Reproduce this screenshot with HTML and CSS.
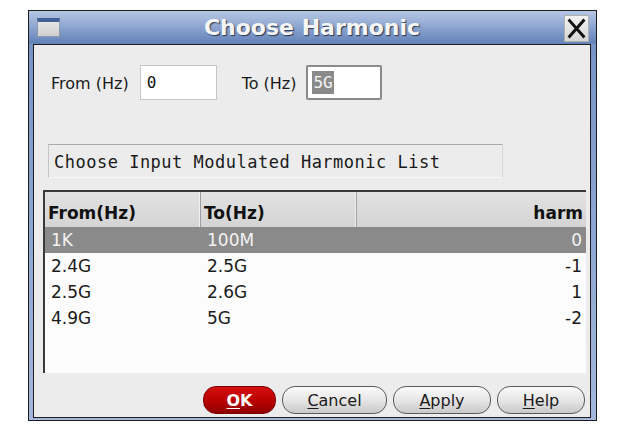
FILE: index.html
```html
<!DOCTYPE html>
<html>
<head>
<meta charset="utf-8">
<link rel="stylesheet" href="styles.css">
</head>
<body>
<div class="window">
  <div class="titlebar">
    <div class="win-icon"></div>
    <div class="title">Choose Harmonic</div>
    <div class="close">
      <svg width="25" height="27" viewBox="0 0 25 27">
        <path d="M5 5 L20 22 M20 5 L5 22" stroke="#111" stroke-width="3.2" stroke-linecap="square"/>
      </svg>
    </div>
  </div>
  <div class="panel">
    <div class="fields">
      <span class="lbl">From (Hz)</span>
      <div class="input from"><span>0</span></div>
      <span class="lbl to-lbl">To (Hz)</span>
      <div class="input to"><span class="sel">5G</span></div>
    </div>
    <div class="caption">Choose Input Modulated Harmonic List</div>
    <div class="table">
      <div class="thead">
        <div class="th c1">From(Hz)</div>
        <div class="th c2">To(Hz)</div>
        <div class="th c3">harm</div>
      </div>
      <div class="row selected">
        <div class="td c1">1K</div><div class="td c2">100M</div><div class="td c3">0</div>
      </div>
      <div class="row">
        <div class="td c1">2.4G</div><div class="td c2">2.5G</div><div class="td c3">-1</div>
      </div>
      <div class="row">
        <div class="td c1">2.5G</div><div class="td c2">2.6G</div><div class="td c3">1</div>
      </div>
      <div class="row">
        <div class="td c1">4.9G</div><div class="td c2">5G</div><div class="td c3">-2</div>
      </div>
    </div>
    <div class="buttons">
      <button class="btn ok"><u>O</u>K</button>
      <button class="btn cancel"><u>C</u>ancel</button>
      <button class="btn apply"><u>A</u>pply</button>
      <button class="btn help"><u>H</u>elp</button>
    </div>
  </div>
</div>
</body>
</html>
```
FILE: styles.css
```css
html, body {
  margin: 0;
  padding: 0;
  background: #ffffff;
}
body {
  width: 625px;
  height: 432px;
  overflow: hidden;
  font-family: "DejaVu Sans", sans-serif;
}
.window {
  margin: 10px 0 0 28px;
  width: 569px;
  height: 411px;
  box-sizing: border-box;
  border: 1px solid #1c1c1c;
  padding: 0 5px 2px 4px;
  display: flex;
  flex-direction: column;
  background: linear-gradient(to bottom, #b6c7e5 0px, #6181b8 33px, #7794c6 33px, #a3b8dc 100%);
}
.titlebar {
  height: 33px;
  display: flex;
  align-items: center;
  flex-shrink: 0;
}
.win-icon {
  width: 23px;
  height: 19px;
  margin-left: 4px;
  box-sizing: border-box;
  border: 1px solid #8c98ac;
  border-top: 4px solid #3f5f96;
  background: linear-gradient(#e6e6e6, #cfcfcf);
}
.title {
  flex: 1;
  text-align: center;
  color: #f6f6f6;
  font-weight: bold;
  font-size: 22px;
  text-shadow: 1px 1px 1px #2a3650;
  line-height: 33px;
}
.close {
  width: 25px;
  height: 27px;
  margin-right: 2px;
  margin-top: 2px;
  box-sizing: border-box;
  background: linear-gradient(#f2f2f2, #d6d6d6);
  border: 1px solid #b0b0b0;
  display: flex;
  align-items: center;
  justify-content: center;
}
.close svg { display: block; }
.panel {
  flex: 1;
  border: 1px solid #1e1e1e;
  background: #ececec;
  display: flex;
  flex-direction: column;
}
.fields {
  display: flex;
  align-items: center;
  margin-top: 20px;
  padding-left: 17px;
  height: 35px;
}
.lbl {
  font-size: 16px;
  color: #1a1a1a;
  padding-top: 2px;
}
.to-lbl { margin-left: 25px; }
.input {
  height: 35px;
  box-sizing: border-box;
  background: #ffffff;
  display: flex;
  align-items: center;
  font-family: "DejaVu Sans Mono", monospace;
  font-size: 16px;
  color: #111;
}
.input.from {
  width: 77px;
  margin-left: 11px;
  border: 1px solid #c6c6c6;
  padding-left: 6px;
}
.input.to {
  width: 76px;
  margin-left: 10px;
  border: 2px solid #8a8a8a;
  border-radius: 2px;
  padding-left: 4px;
}
.sel {
  background: #8a8a8a;
  color: #f4f4f4;
  padding: 2px 1px;
}
.caption {
  margin: 44px 0 0 14px;
  width: 455px;
  height: 34px;
  box-sizing: border-box;
  border-top: 1px solid #a8a8a8;
  border-left: 1px solid #c4c4c4;
  border-right: 1px solid #d8d8d8;
  border-bottom: 1px solid #f8f8f8;
  padding: 7px 0 0 5px;
  font-family: "DejaVu Sans Mono", monospace;
  font-size: 17px;
  letter-spacing: 0.5px;
  color: #1a1a1a;
}
.table {
  margin: 12px 0 0 9px;
  width: 543px;
  height: 183px;
  box-sizing: border-box;
  border-top: 2px solid #3a3a3a;
  border-left: 2px solid #3a3a3a;
  background: #fcfcfc;
  font-size: 17px;
}
.thead {
  display: flex;
  height: 35px;
  background: linear-gradient(#e2e2e2, #d4d4d4);
}
.th {
  box-sizing: border-box;
  height: 35px;
  padding-top: 6px;
  display: flex;
  align-items: center;
  font-weight: bold;
  color: #111;
}
.c1 { width: 156px; }
.c2 { width: 156px; }
.c3 { flex: 1; justify-content: flex-end; text-align: right; }
.th.c1, .th.c2 {
  border-right: 1px solid #9e9e9e;
  box-shadow: inset -1px 0 0 #f0f0f0;
  padding-left: 3px;
}
.th.c3 { padding-right: 3px; }
.row {
  display: flex;
  height: 26px;
  align-items: center;
  color: #1a1a1a;
}
.row.selected {
  background: #8a8a8a;
  color: #f2f2f2;
}
.td.c1, .td.c2 { padding-left: 6px; box-sizing: border-box; }
.td.c3 { padding-right: 4px; }
.buttons {
  display: flex;
  justify-content: flex-end;
  gap: 6px;
  margin-top: 13px;
  padding-right: 5px;
}
.btn {
  height: 28px;
  box-sizing: border-box;
  border: 1px solid #5a5a5a;
  border-radius: 13px;
  background: linear-gradient(#fbfbfb 0%, #e6e6e6 50%, #c9c9c9 100%);
  font-family: "DejaVu Sans", sans-serif;
  font-size: 16px;
  color: #1a1a1a;
  padding: 0;
  margin: 0;
}
.btn u { text-underline-offset: 2px; }
.ok {
  width: 73px;
  background: linear-gradient(#d41010 0%, #b80000 55%, #8e0000 100%);
  border-color: #7a0000;
  color: #ffffff;
  font-weight: bold;
}
.cancel { width: 105px; }
.apply { width: 98px; }
.help { width: 88px; }
```
